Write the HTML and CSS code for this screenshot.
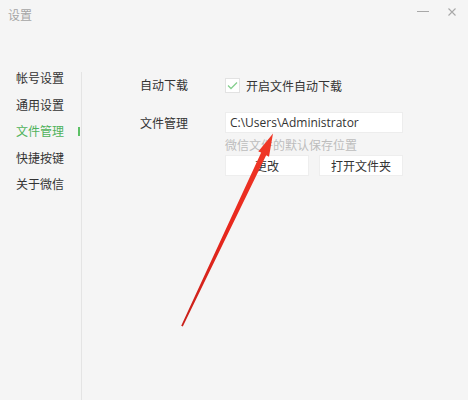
FILE: index.html
```html
<!DOCTYPE html>
<html lang="zh-CN">
<head>
<meta charset="utf-8">
<title>设置</title>
<link rel="stylesheet" href="styles.css">
</head>
<body>
<div class="window">
  <header class="titlebar">
    <span class="title">设置</span>
    <div class="controls">
      <svg class="ctl-min" width="12" height="12" viewBox="0 0 12 12"><line x1="0" y1="5.5" x2="12" y2="5.5" stroke="#a8a8a8" stroke-width="1"/></svg>
      <svg class="ctl-close" width="10" height="10" viewBox="0 0 10 10"><path d="M1.5 1.5 L8.5 8.5 M8.5 1.5 L1.5 8.5" stroke="#a8a8a8" stroke-width="1.1" fill="none"/></svg>
    </div>
  </header>
  <div class="main">
    <nav class="nav">
      <div class="nav-item">帐号设置</div>
      <div class="nav-item">通用设置</div>
      <div class="nav-item active">文件管理</div>
      <div class="nav-item">快捷按键</div>
      <div class="nav-item">关于微信</div>
    </nav>
    <div class="divider"></div>
    <section class="content">
      <div class="row row-auto">
        <div class="label">自动下载</div>
        <label class="check">
          <span class="box"><svg width="11" height="9" viewBox="0 0 11 9"><path d="M1 4.5 L4 7.5 L10 1.5" stroke="#86cf8f" stroke-width="1.3" fill="none"/></svg></span>
          <span class="check-text">开启文件自动下载</span>
        </label>
      </div>
      <div class="row row-file">
        <div class="label">文件管理</div>
        <div class="field">
          <div class="path">C:\Users\Administrator</div>
          <div class="hint">微信文件的默认保存位置</div>
          <div class="buttons">
            <div class="btn">更改</div>
            <div class="btn">打开文件夹</div>
          </div>
        </div>
      </div>
    </section>
  </div>
  <svg class="arrow" width="468" height="400" viewBox="0 0 468 400">
    <defs>
      <linearGradient id="ag" x1="182" y1="326" x2="273" y2="134" gradientUnits="userSpaceOnUse">
        <stop offset="0" stop-color="#c8201a"/>
        <stop offset="0.5" stop-color="#e8271d"/>
        <stop offset="1" stop-color="#f03a28"/>
      </linearGradient>
    </defs>
    <polygon fill="url(#ag)" points="273,133.5 269,156.8 266.2,155.3 182.8,326.4 181.2,325.7 261.2,152.6 258.3,151.4"/>
  </svg>
</div>
</body>
</html>
```

FILE: styles.css
```css
html, body {
  margin: 0;
  padding: 0;
}
body {
  background: #f5f5f5;
  font-family: "Noto Sans CJK SC", "Noto Sans", sans-serif;
  color: #333;
}
.window {
  position: relative;
  width: 468px;
  height: 400px;
  overflow: hidden;
  display: flex;
  flex-direction: column;
}
.titlebar {
  height: 30px;
  display: flex;
  justify-content: space-between;
  padding-left: 8px;
  flex-shrink: 0;
}
.title {
  font-size: 12px;
  line-height: 30px;
  color: #a5a5a5;
}
.controls {
  display: flex;
  align-items: flex-start;
  padding-top: 6px;
  padding-right: 11px;
  gap: 18px;
}
.ctl-close {
  margin-top: 1px;
}
.main {
  display: flex;
  flex: 1;
  padding-top: 35px;
}
.nav {
  width: 80px;
  display: flex;
  flex-direction: column;
}
.nav-item {
  position: relative;
  padding-left: 16px;
  font-size: 12px;
  line-height: 26.5px;
  color: #333;
}
.nav-item.active {
  color: #4fb25b;
}
.nav-item.active::after {
  content: "";
  position: absolute;
  right: 0;
  top: 9px;
  width: 2px;
  height: 9px;
  background: #5cc065;
}
.divider {
  width: 1px;
  margin-left: 1px;
  margin-top: 7px;
  background: #e4e4e4;
}
.content {
  padding-left: 58px;
  padding-top: 9px;
  display: flex;
  flex-direction: column;
  gap: 16px;
}
.row {
  display: flex;
}
.label {
  width: 85px;
  font-size: 12px;
  line-height: 22px;
  color: #333;
}
.check {
  display: flex;
  align-items: center;
  height: 22px;
}
.box {
  width: 13px;
  height: 13px;
  border: 1px solid #e2e2e2;
  background: #fff;
  display: flex;
  align-items: center;
  justify-content: center;
  margin-right: 6px;
}
.check-text {
  font-size: 12px;
  color: #333;
}
.field {
  width: 178px;
  display: flex;
  flex-direction: column;
}
.path {
  height: 21px;
  background: #fff;
  border: 1px solid #ededed;
  box-sizing: border-box;
  padding-left: 4px;
  font-family: "Open Sans", "Noto Sans", sans-serif;
  font-size: 12px;
  line-height: 19px;
  color: #333;
}
.hint {
  margin-top: 2px;
  font-size: 12px;
  line-height: 20px;
  color: #bdbdbd;
}
.buttons {
  margin-top: 0;
  display: flex;
  gap: 10px;
}
.btn {
  width: 84px;
  height: 21px;
  box-sizing: border-box;
  background: #fff;
  border: 1px solid #eeeeee;
  font-size: 12px;
  line-height: 19px;
  text-align: center;
  color: #333;
}
.arrow {
  position: absolute;
  left: 0;
  top: 0;
  pointer-events: none;
}
```
